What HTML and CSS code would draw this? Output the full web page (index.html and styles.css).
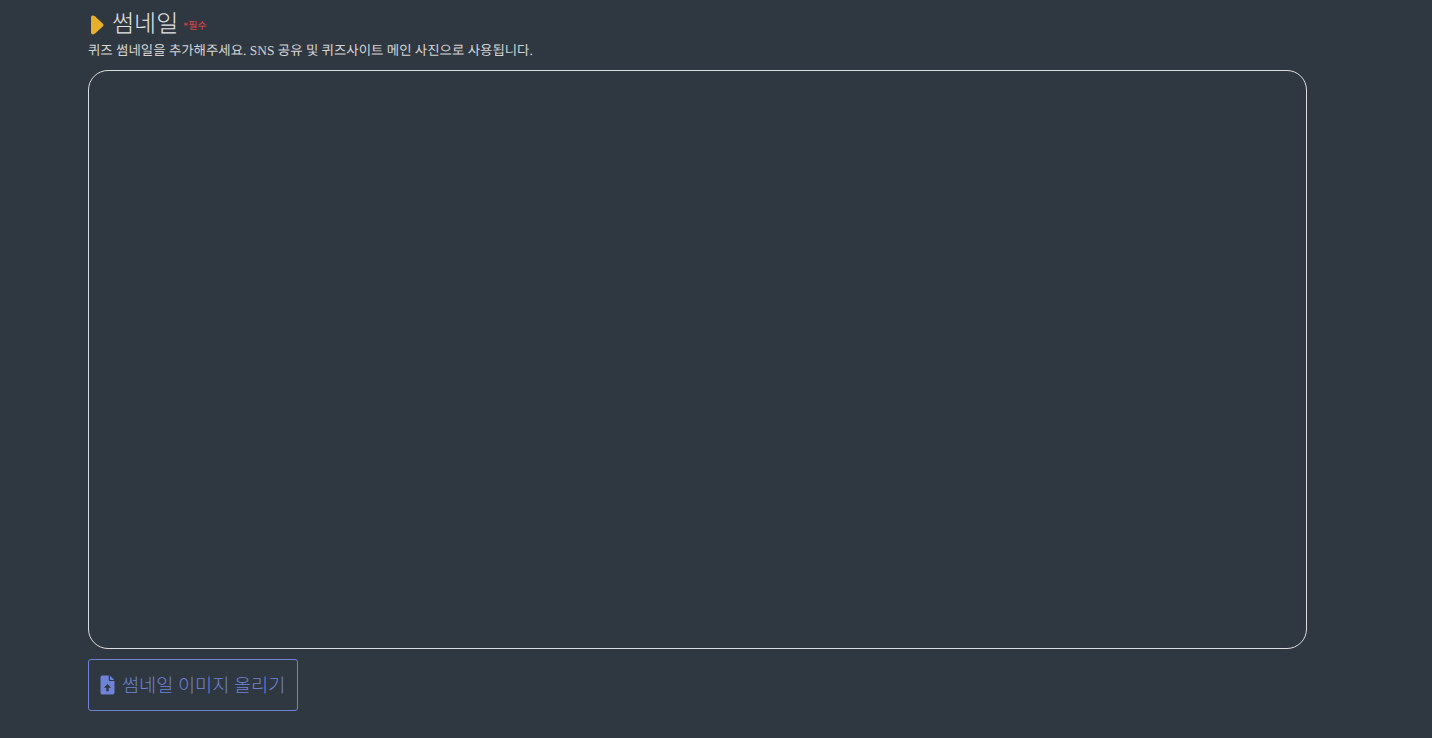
FILE: index.html
```html
<!DOCTYPE html>
<html lang="ko">
<head>
  <meta charset="UTF-8" />
  <meta name="viewport" content="width=device-width, initial-scale=1" />
  <title>썸네일</title>
  <link rel="stylesheet" href="styles.css">
</head>
<body>
  <section class="thumbnail-section">
    <div class="section-title">
      <svg class="title-icon" viewBox="0 0 13 20" aria-hidden="true">
        <path d="M1.8 0.6C3.2 0.6 4.2 1.4 5 2.2L11.7 8.4C12.7 9.3 12.7 10.7 11.7 11.6L5 17.8C4.2 18.6 3.2 19.4 1.8 19.4C0.7 19.4 0 18.6 0 17.5V2.5C0 1.4 0.7 0.6 1.8 0.6Z" />
      </svg>
      <h2>썸네일</h2>
      <span class="required">*필수</span>
    </div>
    <p class="section-desc">퀴즈 썸네일을 추가해주세요. SNS 공유 및 퀴즈사이트 메인 사진으로 사용됩니다.</p>
    <div class="thumbnail-box"></div>
    <button class="upload-btn" type="button">
      <svg class="upload-icon" viewBox="0 0 15 20" aria-hidden="true">
        <path fill-rule="evenodd" d="M2.500 0.500H8.800V4.800C8.800 5.500 9.400 6.100 10.100 6.100H14.500V17.500C14.500 18.800 13.600 19.600 12.400 19.600H2.500C1.300 19.600 0.500 18.800 0.500 17.500V2.600C0.500 1.300 1.300 0.500 2.500 0.500ZM7.500 8.900L3.900 12.700H6.300V16.300H8.700V12.700H11.100ZM10 0.700L14.300 4.900H10Z" />
      </svg>
      <span>썸네일 이미지 올리기</span>
    </button>
  </section>
</body>
</html>
```

FILE: styles.css
```css
html, body {
  height: 100%;
}
body {
  margin: 0;
  background: #2f3740;
  color: #eeeeee;
  font-family: "Liberation Serif", "Noto Sans CJK KR", serif;
  text-rendering: geometricPrecision;
  overflow: hidden;
}
.thumbnail-section {
  width: 1219px;
  margin-left: 88px;
  padding-top: 10px;
}
.section-title {
  display: flex;
  align-items: center;
  height: 30px;
}
.title-icon {
  width: 13px;
  height: 20px;
  margin-left: 3px;
  fill: #e6b02c;
}
.section-title h2 {
  margin: 0 0 0 8px;
  font-size: 24px;
  font-weight: 300;
  line-height: 30px;
  color: #e4e4e4;
}
.required {
  margin-left: 5px;
  padding-bottom: 2px;
  font-size: 10px;
  color: #e04848;
}
.section-desc {
  margin: 0;
  height: 20px;
  padding-top: 1px;
  box-sizing: border-box;
  font-size: 13.44px;
  line-height: 20px;
  color: #d4d4d4;
}
.thumbnail-box {
  box-sizing: border-box;
  height: 579px;
  margin-top: 10px;
  border: 1px solid #dddddd;
  border-radius: 20px;
}
.upload-btn {
  display: flex;
  align-items: center;
  box-sizing: border-box;
  width: 210px;
  height: 52px;
  margin-top: 10px;
  padding: 0 11px;
  background: none;
  border: 1px solid #6f83d6;
  border-radius: 3px;
  color: #6f83d6;
  font: inherit;
  font-size: 18.6px;
  font-weight: 300;
  white-space: nowrap;
  cursor: pointer;
}
.upload-btn span {
  padding-bottom: 3px;
}
.upload-icon {
  width: 15px;
  height: 20px;
  margin-right: 7px;
  fill: #6f83d6;
  flex-shrink: 0;
}
```
